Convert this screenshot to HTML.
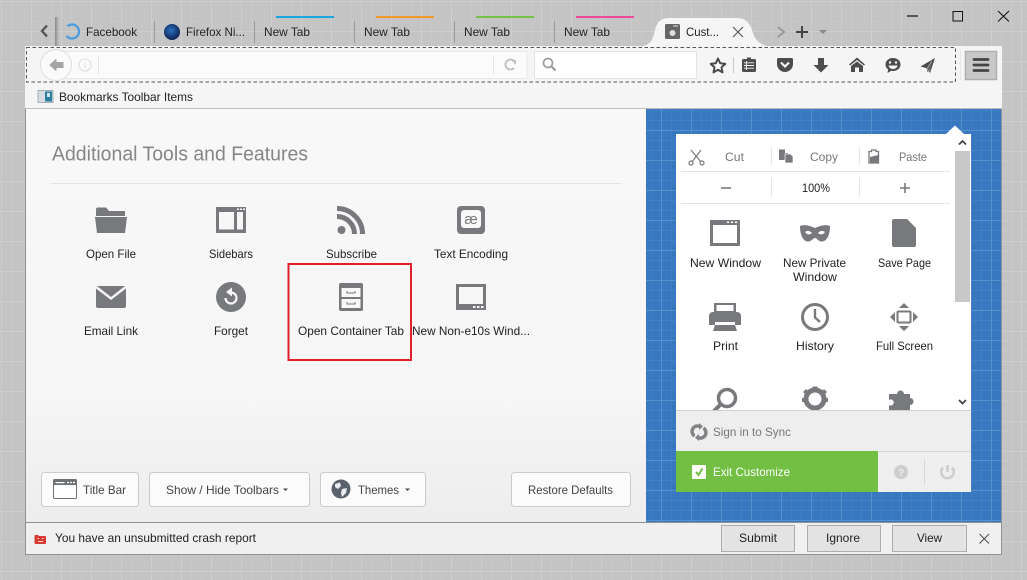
<!DOCTYPE html>
<html><head><meta charset="utf-8"><style>
html,body{margin:0;padding:0;width:1027px;height:580px;overflow:hidden;background:#c4c4c4}
svg{display:block}
text{font-family:"Liberation Sans",sans-serif;font-size:12px;fill:#222}
.g{fill:#777}
.i{fill:#77797c}
</style></head><body>
<svg width="1027" height="580" viewBox="0 0 1027 580" xmlns="http://www.w3.org/2000/svg">
<defs>
<pattern id="gr" width="30" height="30" patternUnits="userSpaceOnUse" x="1" y="1"><rect width="30" height="30" fill="#c4c4c4"/><path d="M0 10.500H30M0 20.500H30M10.500 0V30M20.500 0V30" stroke="#c8c8c8"/><path d="M0 .5H30M.5 0V30" stroke="#cecece"/></pattern>
<pattern id="bl" width="30" height="30" patternUnits="userSpaceOnUse" x="661" y="130"><rect width="30" height="30" fill="#3878c0"/><path d="M0 10.500H30M0 20.500H30M10.500 0V30M20.500 0V30" stroke="#447fc4"/><path d="M0 .5H30M.5 0V30" stroke="#5590cd"/></pattern>
<linearGradient id="mg" x1="0" y1="0" x2="0" y2="1"><stop offset="0" stop-color="#f8f8f8"/><stop offset=".7" stop-color="#f6f6f6"/><stop offset="1" stop-color="#ededed"/></linearGradient>
<radialGradient id="ff" cx=".45" cy=".4" r=".65"><stop offset="0" stop-color="#2c6fc0"/><stop offset="1" stop-color="#0b1c4a"/></radialGradient>
<linearGradient id="sh" x1="0" x2="1"><stop offset="0" stop-color="#8a8a8a"/><stop offset="1" stop-color="#8a8a8a" stop-opacity="0"/></linearGradient>
<clipPath id="pc"><rect x="676" y="134" width="279" height="276"/></clipPath>
</defs>
<rect width="1027" height="580" fill="url(#gr)"/>

<!-- tabs -->
<path d="M47 25.500L42 31L47 36.500" stroke="#555" stroke-width="2.400" fill="none"/>
<rect x="55" y="17" width="4" height="29" fill="url(#sh)"/>
<path d="M72 24.500a7 7 0 1 1-7 7" stroke="#4a9be0" stroke-width="2.200" fill="none" transform="rotate(-40 72 31.500)"/>
<text x="86" y="36" textLength="51" lengthAdjust="spacingAndGlyphs">Facebook</text>
<path d="M154.500 21V43M254.500 21V43M354.500 21V43M454.500 21V43M554.500 21V43" stroke="#9a9a9a"/>
<circle cx="172" cy="32" r="8" fill="url(#ff)"/>
<text x="186" y="36" textLength="59" lengthAdjust="spacingAndGlyphs">Firefox Ni...</text>
<text x="264" y="36" textLength="46" lengthAdjust="spacingAndGlyphs">New Tab</text>
<text x="364" y="36" textLength="46" lengthAdjust="spacingAndGlyphs">New Tab</text>
<text x="464" y="36" textLength="46" lengthAdjust="spacingAndGlyphs">New Tab</text>
<text x="564" y="36" textLength="46" lengthAdjust="spacingAndGlyphs">New Tab</text>
<rect x="276" y="16" width="58" height="2" fill="#1aa7e0"/>
<rect x="376" y="16" width="58" height="2" fill="#f19a27"/>
<rect x="476" y="16" width="58" height="2" fill="#78c048"/>
<rect x="576" y="16" width="58" height="2" fill="#ec4a97"/>

<!-- active tab -->
<path d="M643 46C652 44 653 38 655 30C657 22 661 18 670 18H736C745 18 749 22 752 30C754 38 758 44 767 46Z" fill="#f5f5f5"/>
<rect x="665" y="24" width="15" height="15" rx="1.500" fill="#666"/>
<circle cx="672.500" cy="33" r="3" fill="#ddd"/><rect x="673" y="25.500" width="5" height="1" fill="#ddd"/>
<text x="686" y="36" textLength="33" lengthAdjust="spacingAndGlyphs">Cust...</text>
<path d="M733 27L743 37M743 27L733 37" stroke="#555" stroke-width="1.100"/>
<path d="M778 27L784 32L778 37" stroke="#999" stroke-width="2" fill="none"/>
<path d="M802 26V38M796 32H808" stroke="#444" stroke-width="2"/>
<path d="M819 30H827L823 34Z" fill="#888"/>

<!-- window controls -->
<path d="M907 16H918" stroke="#111" stroke-width="1.200"/>
<rect x="953" y="11.500" width="9.500" height="9.500" fill="none" stroke="#111"/>
<path d="M998 11L1009 21.500M1009 11L998 21.500" stroke="#111" stroke-width="1.100"/>

<!-- nav toolbar -->
<rect x="25" y="46" width="977" height="63" fill="#f5f5f5"/>
<rect x="26.500" y="47.500" width="929" height="34.500" fill="none" stroke="#555" stroke-dasharray="3.500 2.500"/>
<rect x="56" y="51.500" width="471" height="27" fill="#fbfbfb" stroke="#e9e9e9"/>
<circle cx="56" cy="65" r="15.500" fill="#fafafa" stroke="#dedede"/>
<path d="M50 65L56 59.500V62.500H63V67.500H56V70.500Z" fill="#a4a4a4" stroke="#a4a4a4" stroke-linejoin="round"/>
<circle cx="85" cy="65" r="6" fill="none" stroke="#e2e2e2" stroke-width="1.300"/><path d="M85 62.500V63.500M85 64.500V68" stroke="#dcdcdc" stroke-width="1.300"/>
<path d="M98.500 56V74M493.500 56V74" stroke="#e6e6e6"/>
<path d="M514 61A5 5 0 1 0 514 68" stroke="#c2c2c2" stroke-width="2" fill="none"/><path d="M511 60H516V65Z" fill="#c2c2c2"/>
<rect x="534.500" y="51.500" width="162" height="27" fill="#fff" stroke="#e4e4e4"/>
<circle cx="548" cy="63" r="4.500" fill="none" stroke="#9a9a9a" stroke-width="1.700"/><path d="M551.500 66.500L555.500 70.500" stroke="#9a9a9a" stroke-width="2.200"/>
<path d="M718 58.500L720.200 63.300L725.300 63.900L721.500 67.300L722.500 72.400L718 69.800L713.500 72.400L714.500 67.300L710.700 63.900L715.800 63.300Z" fill="#fff" stroke="#4a4a4a" stroke-width="2" stroke-linejoin="round"/>
<path d="M733.500 57V73" stroke="#c8c8c8"/>
<path d="M742 60.500a1.500 1.500 0 0 1 1.500-1.500H747V57.500h4V59h3.500a1.500 1.500 0 0 1 1.500 1.500V70.500a1.500 1.500 0 0 1-1.500 1.500H743.500a1.500 1.500 0 0 1-1.500-1.500Z" fill="#4d4d4d"/>
<path d="M744 62.800H754M744 65.500H754M744 68.200H754M746.500 61V70" stroke="#f5f5f5" stroke-width=".9"/>
<path d="M777 59.500a1.500 1.500 0 0 1 1.500-1.500H791.500a1.500 1.500 0 0 1 1.500 1.500V64a8 8 0 0 1-16 0Z" fill="#4d4d4d"/>
<path d="M781 62.500L785 66.500L789 62.500" stroke="#f5f5f5" stroke-width="2.200" fill="none"/>
<path d="M818 58H824V65H828.500L821 72.500L813.500 65H818Z" fill="#4d4d4d"/>
<path d="M857 57.500L865 64.500L864 65.500L857 60L850 65.500L849 64.500Z" fill="#4d4d4d"/><path d="M857 61.500L863 66V72H859V67.500H855V72H851V66Z" fill="#4d4d4d"/>
<path d="M893 58c4.500 0 7.500 2.800 7.500 6.500S897.500 71 893 71c-.6 0-1.200 0-1.800-.2L887.500 73l.6-3.600C886.300 68.200 885.500 66.500 885.500 64.500 885.500 60.800 888.500 58 893 58Z" fill="#4d4d4d"/>
<circle cx="890" cy="62.500" r="1.200" fill="#f5f5f5"/><circle cx="896" cy="62.500" r="1.200" fill="#f5f5f5"/><path d="M888.500 65.500H897.500C897 68 895 69 893 69S889 68 888.500 65.500Z" fill="#f5f5f5"/>
<path d="M935 58L920.500 66.500L926 68L930 73L935 58Z" fill="#4d4d4d"/><path d="M932 61L927 68.500V73L930 69.500" fill="#666" stroke="#f5f5f5" stroke-width=".5"/>
<path d="M960.500 50V80" stroke="#e8e8e8"/>
<rect x="965.500" y="51.500" width="31" height="28" fill="#c8c8c8" stroke="#aeaeae" stroke-width="1.500"/>
<path d="M974 59.500H988M974 65H988M974 70.500H988" stroke="#444" stroke-width="2.800" stroke-linecap="round"/>

<!-- bookmarks -->
<rect x="38" y="90.500" width="15" height="12" fill="#d7dde2" stroke="#8a949c" stroke-width=".7"/>
<rect x="45" y="91.500" width="7" height="10" fill="#2a7f9e"/><rect x="47" y="93" width="3" height="4" fill="#cfe4ec"/>
<text x="59" y="101" textLength="134" lengthAdjust="spacingAndGlyphs">Bookmarks Toolbar Items</text>

<!-- main panel -->
<rect x="25" y="108" width="977" height="447" fill="#8d9296"/>
<rect x="25" y="108" width="977" height="1" fill="#c0c0c0"/>
<rect x="26" y="109" width="620" height="413" fill="url(#mg)"/>
<rect x="646" y="109" width="355" height="413" fill="url(#bl)"/>
<rect x="26" y="523" width="975" height="31" fill="#f0f0f0"/>

<text x="52" y="160.500" textLength="256" lengthAdjust="spacingAndGlyphs" style="font-size:20px;fill:#868686">Additional Tools and Features</text>
<rect x="51" y="183" width="570" height="1" fill="#e3e3e3"/>

<!-- grid icons row 1 -->
<path d="M96 209.500a2 2 0 0 1 2-2H106L109 211H125V216H96Z M95 217H127L125 233H97Z" class="i"/>
<path d="M216 207H246V233H216ZM219 212V229.500H234V212ZM237 212V229.500H243V212Z" class="i" fill-rule="evenodd"/>
<rect x="237" y="208.500" width="2" height="1.500" fill="#f8f8f8"/><rect x="240" y="208.500" width="2" height="1.500" fill="#f8f8f8"/><rect x="243" y="208.500" width="2" height="1.500" fill="#f8f8f8"/>
<circle cx="341.500" cy="230" r="4" class="i"/>
<path d="M337 216.500A17.500 17.500 0 0 1 354.500 234" stroke="#77797c" stroke-width="5" fill="none"/>
<path d="M337 208.500A25.500 25.500 0 0 1 362.500 234" stroke="#77797c" stroke-width="5" fill="none"/>
<rect x="457" y="206" width="28" height="28" rx="4" class="i"/>
<rect x="461" y="210" width="20" height="18" rx="3" fill="#f8f8f8"/>
<text x="471" y="224" text-anchor="middle" style="font-size:15px;fill:#77797c">æ</text>
<text x="86" y="258" textLength="50" lengthAdjust="spacingAndGlyphs">Open File</text>
<text x="209" y="258" textLength="44" lengthAdjust="spacingAndGlyphs">Sidebars</text>
<text x="326" y="258" textLength="51" lengthAdjust="spacingAndGlyphs">Subscribe</text>
<text x="434" y="258" textLength="74" lengthAdjust="spacingAndGlyphs">Text Encoding</text>

<!-- row 2 -->
<path d="M96 288.500L111 300L126 288.500V306a2 2 0 0 1-2 2H98a2 2 0 0 1-2-2Z" class="i"/>
<path d="M97 286H125L111 297Z" class="i"/>
<circle cx="231" cy="297" r="15" class="i"/>
<path d="M227.500 292.500H231A5.500 5.500 0 1 1 225.500 298" stroke="#f8f8f8" stroke-width="2.200" fill="none"/><path d="M232 287.500V296.500L226 292Z" fill="#f8f8f8"/>
<rect x="339" y="283" width="24" height="28" rx="2" class="i"/>
<rect x="341.500" y="288" width="19" height="9" fill="#f8f8f8"/><rect x="341.500" y="299" width="19" height="9" fill="#f8f8f8"/>
<path d="M347 291V293H355V291M347 302V304H355V302" stroke="#77797c" fill="none"/>
<path d="M456 284H486V310H456ZM459 287V304H483V287Z" class="i" fill-rule="evenodd"/>
<rect x="473" y="306" width="2.500" height="2" fill="#f8f8f8"/><rect x="477" y="306" width="2.500" height="2" fill="#f8f8f8"/><rect x="481" y="306" width="2.500" height="2" fill="#f8f8f8"/>
<text x="84" y="335" textLength="54" lengthAdjust="spacingAndGlyphs">Email Link</text>
<text x="214" y="335" textLength="34" lengthAdjust="spacingAndGlyphs">Forget</text>
<text x="298" y="335" textLength="106" lengthAdjust="spacingAndGlyphs">Open Container Tab</text>
<text x="412" y="335" textLength="118" lengthAdjust="spacingAndGlyphs">New Non-e10s Wind...</text>
<rect x="288.500" y="264" width="122.500" height="96" fill="none" stroke="#e0202a" stroke-width="2"/>

<!-- bottom buttons -->
<g fill="#fbfbfb" stroke="#cbcbcb"><rect x="41.500" y="472.500" width="97" height="34" rx="3"/><rect x="149.500" y="472.500" width="160" height="34" rx="3"/><rect x="320.500" y="472.500" width="105" height="34" rx="3"/><rect x="511.500" y="472.500" width="119" height="34" rx="3"/></g>
<rect x="53.500" y="479.500" width="23" height="19" rx="1" fill="#fff" stroke="#6f7275"/>
<rect x="54" y="480" width="22" height="5" fill="#6f7275"/><rect x="55.500" y="482" width="9" height="1.200" fill="#fff"/><path d="M67 482.500H75" stroke="#fff" stroke-width="1.200" stroke-dasharray="2 1"/>
<text x="83" y="494" textLength="43" lengthAdjust="spacingAndGlyphs" style="fill:#444">Title Bar</text>
<text x="166" y="494" textLength="113" lengthAdjust="spacingAndGlyphs" style="fill:#444">Show / Hide Toolbars</text>
<path d="M283 488.500H288L285.500 491Z" fill="#444"/>
<circle cx="341" cy="489" r="9.500" fill="#59626b"/>
<path d="M335 484L340 482.500L341 486L338 489L335 487ZM342 489L347 488L346 493L342 497L341 493Z" fill="#e8ecef"/>
<text x="358" y="494" textLength="41" lengthAdjust="spacingAndGlyphs" style="fill:#444">Themes</text>
<path d="M405 488.500H410L407.500 491Z" fill="#444"/>
<text x="528" y="494" textLength="85" lengthAdjust="spacingAndGlyphs" style="fill:#444">Restore Defaults</text>

<!-- notification bar -->
<path d="M34.500 536a1 1 0 0 1 1-1H38L39 536H45a1 1 0 0 1 1 1V543a1 1 0 0 1-1 1H35.500a1 1 0 0 1-1-1Z" fill="#d63a32"/>
<path d="M37.500 538.500H39M42 538.500H43.500M38 541.500H43" stroke="#f7d6d3"/>
<text x="55" y="542" textLength="201" lengthAdjust="spacingAndGlyphs">You have an unsubmitted crash report</text>
<g fill="#e3e3e3" stroke="#adadad"><rect x="721.500" y="525.500" width="73" height="26"/><rect x="807.500" y="525.500" width="73" height="26"/><rect x="892.500" y="525.500" width="74" height="26"/></g>
<text x="739" y="542" textLength="38" lengthAdjust="spacingAndGlyphs">Submit</text>
<text x="826" y="542" textLength="34" lengthAdjust="spacingAndGlyphs">Ignore</text>
<text x="917" y="542" textLength="25" lengthAdjust="spacingAndGlyphs">View</text>
<path d="M979.500 534L989 543.500M989 534L979.500 543.500" stroke="#555" stroke-width="1.100"/>

<!-- customize panel -->
<path d="M946 134L955 125.500L964 134Z" fill="#fff"/>
<rect x="676" y="134" width="295" height="358" fill="#fff"/>
<rect x="955" y="137" width="15" height="273" fill="#fff"/>
<rect x="955" y="151" width="15" height="151" fill="#c8c8c8"/>
<path d="M959 144.500L962.500 141L966 144.500M959 400L962.500 403.500L966 400" stroke="#444" stroke-width="1.800" fill="none"/>

<g stroke="#77797c" stroke-width="1.200" fill="none"><path d="M691 150L701 162M701 150L692 162"/><circle cx="691" cy="163" r="2"/><circle cx="702" cy="163" r="2"/></g>
<text x="725" y="161" textLength="19" lengthAdjust="spacingAndGlyphs" class="g">Cut</text>
<path d="M779 149.500H785V153H788V160H779Z" fill="#77797c"/><path d="M785 154H790.500L793 156.500V163H785Z" fill="#77797c" stroke="#fff" stroke-width=".7"/>
<text x="810" y="161" textLength="28" lengthAdjust="spacingAndGlyphs" class="g">Copy</text>
<path d="M869 151.500H871.500V150H876V151.500H878.500V163H869Z" fill="#fff" stroke="#77797c" stroke-width="1.300"/><path d="M870 157L878 155V162.500H870Z" fill="#77797c"/>
<text x="899" y="161" textLength="28" lengthAdjust="spacingAndGlyphs" class="g">Paste</text>
<path d="M771.500 147V165M859.500 147V165M771.500 178V197M859.500 178V197" stroke="#e3e3e3"/>
<path d="M681 171.500H950M681 203.500H950" stroke="#e6e6e6"/>
<path d="M721 188H731" stroke="#77797c" stroke-width="1.600"/>
<text x="802" y="192" textLength="28" lengthAdjust="spacingAndGlyphs">100%</text>
<path d="M900 188H910M905 183V193" stroke="#77797c" stroke-width="1.600"/>

<!-- panel row 1 -->
<path d="M710 220H740V246H710ZM713 225V243H737V225Z" class="i" fill-rule="evenodd"/>
<rect x="727" y="221.500" width="2.200" height="1.500" fill="#fff"/><rect x="731" y="221.500" width="2.200" height="1.500" fill="#fff"/><rect x="735" y="221.500" width="2.200" height="1.500" fill="#fff"/>
<path d="M800 226C805 224 810 226 815 228C820 226 825 224 830 226C830 235 827 242 821 241.500C818 241 817 238 815 238C813 238 812 241 809 241.500C803 242 800 235 800 226Z" class="i"/>
<path d="M805 232C808 230 810 231 812 233C810 235 807 235 805 232ZM825 232C822 230 820 231 818 233C820 235 823 235 825 232Z" fill="#fff"/>
<path d="M894 219H907L916 228V245a2 2 0 0 1-2 2H894a2 2 0 0 1-2-2V221a2 2 0 0 1 2-2Z" class="i"/>
<text x="690" y="267" textLength="71" lengthAdjust="spacingAndGlyphs">New Window</text>
<text x="783" y="267" textLength="63" lengthAdjust="spacingAndGlyphs">New Private</text>
<text x="793" y="281" textLength="44" lengthAdjust="spacingAndGlyphs">Window</text>
<text x="878" y="267" textLength="53" lengthAdjust="spacingAndGlyphs">Save Page</text>

<!-- panel row 2 -->
<path d="M714 303H736V312H714Z M709 316a4 4 0 0 1 4-4H737a4 4 0 0 1 4 4V325H735V322H715V325H709Z" class="i"/>
<rect x="716.500" y="305" width="17" height="6" fill="#fff"/>
<path d="M715 325H735L737 331H713Z" class="i"/>
<circle cx="815" cy="317" r="12.500" fill="none" stroke="#77797c" stroke-width="3"/>
<path d="M815 309V317.500L820 322" stroke="#77797c" stroke-width="2.400" fill="none"/>
<path d="M904 303L909 308H899ZM904 331L909 326H899ZM890 317L895 312V322ZM918 317L913 312V322Z" class="i"/>
<rect x="897.500" y="311.500" width="13" height="11" rx="1" fill="#fff" stroke="#77797c" stroke-width="2"/>
<text x="713" y="350" textLength="25" lengthAdjust="spacingAndGlyphs">Print</text>
<text x="796" y="350" textLength="38" lengthAdjust="spacingAndGlyphs">History</text>
<text x="876" y="350" textLength="57" lengthAdjust="spacingAndGlyphs">Full Screen</text>

<!-- panel row 3 clipped -->
<g clip-path="url(#pc)">
<circle cx="727" cy="398" r="8.500" fill="none" stroke="#77797c" stroke-width="3.500"/>
<path d="M721 404L712 413" stroke="#77797c" stroke-width="4"/>
<circle cx="815" cy="399" r="9" fill="none" stroke="#77797c" stroke-width="5"/>
<path d="M812.500 386.500h5v4h-5zM803 392l3-3 3 3-3 3zM827 392l-3-3-3 3 3 3zM802 398h4v4h-4zM824 398h4v4h-4z" class="i"/>
<path d="M889 394H897A3.500 3.500 0 1 1 904 394H910V398A3.500 3.500 0 1 1 910 405V412H889V405A3 3 0 1 0 889 400Z" class="i"/>
</g>

<!-- panel footer -->
<rect x="676" y="410" width="295" height="82" fill="#eeeeee"/>
<rect x="676" y="410" width="295" height="1" fill="#cfcfcf"/>
<rect x="676" y="451" width="295" height="1" fill="#d8d8d8"/>
<path d="M694.500 436A5.500 5.500 0 0 1 700 426.500M703.500 428A5.500 5.500 0 0 1 698 437.500" stroke="#808285" stroke-width="3.400" fill="none"/>
<path d="M699 423V430L703 426.500ZM699 441V434L695 437.500Z" fill="#808285"/>
<text x="713" y="436" textLength="78" lengthAdjust="spacingAndGlyphs" class="g">Sign in to Sync</text>
<rect x="676" y="451" width="202" height="41" fill="#72bf44"/>
<rect x="692" y="465" width="14" height="14" rx="1" fill="#fff"/>
<path d="M696 472L698.500 475L702.500 468.500" stroke="#72bf44" stroke-width="2" fill="none"/>
<text x="713" y="476" textLength="77" lengthAdjust="spacingAndGlyphs" style="fill:#fff">Exit Customize</text>
<circle cx="901" cy="472" r="7" fill="#cdcdcd"/>
<text x="901" y="476" text-anchor="middle" style="font-size:10px;font-weight:bold;fill:#eee">?</text>
<rect x="924" y="459" width="1" height="26" fill="#d6d6d6"/>
<path d="M943 467.500A6.300 6.300 0 1 0 952 467.500" stroke="#cdcdcd" stroke-width="2.500" fill="none"/>
<path d="M947.500 465V472" stroke="#cdcdcd" stroke-width="2.500"/>
</svg>
</body></html>
